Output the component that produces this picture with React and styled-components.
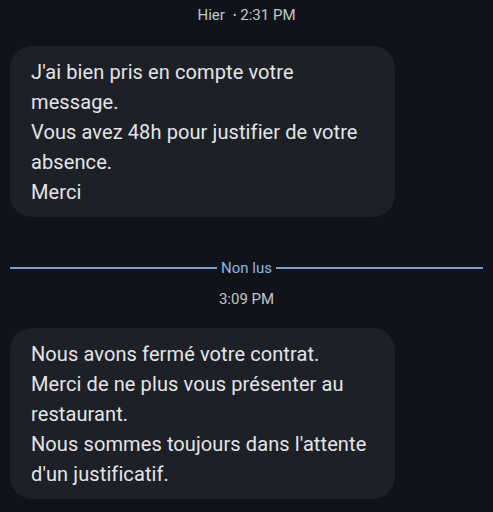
import React from "react";
import styled, { createGlobalStyle } from "styled-components";

const Global = createGlobalStyle`
  html, body { margin: 0; padding: 0; background: #10141a; }
  body { font-family: Roboto, "Noto Sans", "Liberation Sans", sans-serif; }
`;

const Thread = styled.div`
  display: flex;
  flex-direction: column;
  padding: 5px 10px 0 10px;
  min-height: 512px;
  box-sizing: border-box;
  background: #10141a;
`;

const Stamp = styled.div`
  text-align: center;
  font-size: 15px;
  line-height: 20px;
  color: #c3c6cb;
  margin-bottom: ${(p) => p.$after}px;
`;

const Dot = styled.span`
  margin: 0 4px 0 8px;
  font-size: 10px;
  vertical-align: 1px;
`;

const Bubble = styled.div`
  width: 385px;
  box-sizing: border-box;
  background: #1d2026;
  border-radius: 22px;
  padding: 11px 20px 10px 21px;
  color: #e4e5e8;
  font-size: 20px;
  line-height: 30px;
  letter-spacing: 0.1px;
`;

const Line = styled.div``;

const Divider = styled.div`
  display: flex;
  align-items: center;
  gap: 4px;
  height: 20px;
  margin: 41px 0 11px 0;
`;

const Rule = styled.div`
  flex: 1;
  height: 2px;
  background: #7d9fc9;
`;

const DividerLabel = styled.span`
  font-size: 15px;
  color: #8db4e4;
`;

export default function App() {
  return (
    <>
      <Global />
      <Thread>
        <Stamp $after={20}>
          Hier<Dot>•</Dot>2:31 PM
        </Stamp>
        <Bubble>
          <Line>J'ai bien pris en compte votre</Line>
          <Line>message.</Line>
          <Line>Vous avez 48h pour justifier de votre</Line>
          <Line>absence.</Line>
          <Line>Merci</Line>
        </Bubble>
        <Divider>
          <Rule />
          <DividerLabel>Non lus</DividerLabel>
          <Rule />
        </Divider>
        <Stamp $after={19}>3:09 PM</Stamp>
        <Bubble>
          <Line>Nous avons fermé votre contrat.</Line>
          <Line>Merci de ne plus vous présenter au</Line>
          <Line>restaurant.</Line>
          <Line>Nous sommes toujours dans l'attente</Line>
          <Line>d'un justificatif.</Line>
        </Bubble>
      </Thread>
    </>
  );
}
